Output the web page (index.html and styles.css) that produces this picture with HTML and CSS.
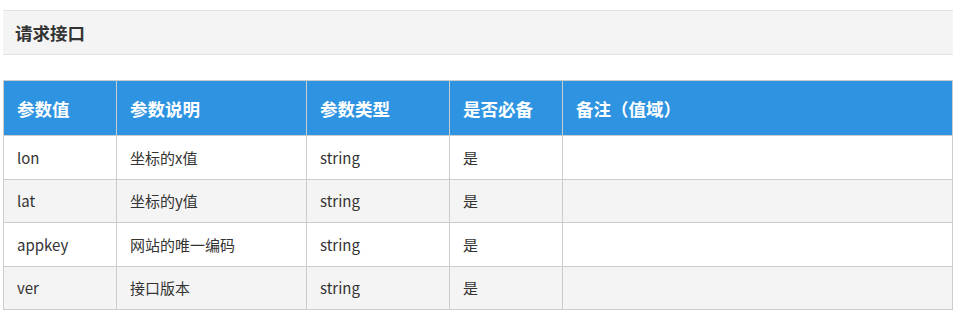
FILE: index.html
```html
<!DOCTYPE html>
<html lang="zh">
<head>
<meta charset="utf-8">
<link rel="stylesheet" href="styles.css">
</head>
<body>
<div class="page">
  <div class="section-title">请求接口</div>
  <table class="params">
    <thead>
      <tr>
        <th class="c1">参数值</th>
        <th class="c2">参数说明</th>
        <th class="c3">参数类型</th>
        <th class="c4">是否必备</th>
        <th class="c5">备注（值域）</th>
      </tr>
    </thead>
    <tbody>
      <tr><td>lon</td><td>坐标的x值</td><td>string</td><td>是</td><td></td></tr>
      <tr><td>lat</td><td>坐标的y值</td><td>string</td><td>是</td><td></td></tr>
      <tr><td>appkey</td><td>网站的唯一编码</td><td>string</td><td>是</td><td></td></tr>
      <tr><td>ver</td><td>接口版本</td><td>string</td><td>是</td><td></td></tr>
    </tbody>
  </table>
</div>
</body>
</html>
```
FILE: styles.css
```css
html, body {
  margin: 0;
  padding: 0;
  background: #fff;
}
.page {
  width: 950px;
  margin-left: 3px;
  padding-top: 10px;
  font-family: "Noto Sans CJK SC", "Noto Sans", sans-serif;
  color: #333;
}
.section-title {
  box-sizing: border-box;
  height: 45px;
  line-height: 43px;
  padding-left: 12px;
  background: #f4f4f4;
  border-top: 1px solid #e3e3e3;
  border-bottom: 1px solid #e3e3e3;
  font-size: 17.5px;
  font-weight: bold;
  color: #333;
}
.params {
  margin-top: 25px;
  width: 950px;
  border-collapse: collapse;
  table-layout: fixed;
  font-size: 15px;
}
.params th, .params td {
  border: 1px solid #cccccc;
  text-align: left;
  padding: 0 0 0 13px;
}
.params th {
  background: #2e94e2;
  color: #fff;
  font-weight: bold;
  font-size: 17.5px;
  height: 54px;
}
.params td {
  height: 42.5px;
  color: #333;
}
.params tbody tr:nth-child(even) td {
  background: #f4f4f4;
}
.params .c1 { width: 99px; }
.params .c2 { width: 176px; }
.params .c3 { width: 129px; }
.params .c4 { width: 99px; }
```
